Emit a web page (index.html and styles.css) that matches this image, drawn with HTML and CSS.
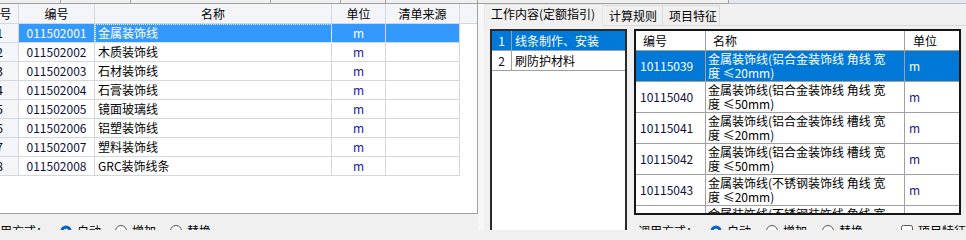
FILE: index.html
```html
<!DOCTYPE html>
<html>
<head>
<meta charset="utf-8">
<link rel="stylesheet" href="styles.css">
</head>
<body>
<div class="strip">
  <span class="s s1"></span><span class="s s2"></span><span class="s s3"></span><span class="s s4"></span><span class="s s5"></span><span class="s s6"></span><span class="s s7"></span><span class="s s8"></span>
</div>
<div class="main">
  <div class="left">
    <div class="lpanel">
      <div class="lgrid">
        <div class="lr lh"><div>序号</div><div>编号</div><div>名称</div><div>单位</div><div>清单来源</div><div class="fill"></div></div>
        <div class="lr sel"><div class="rn">1</div><div class="code">011502001</div><div class="name">金属装饰线</div><div class="unit">m</div><div class="src"></div><div class="fill"></div></div>
        <div class="lr"><div class="rn">2</div><div class="code">011502002</div><div class="name">木质装饰线</div><div class="unit">m</div><div class="src"></div><div class="fill"></div></div>
        <div class="lr"><div class="rn">3</div><div class="code">011502003</div><div class="name">石材装饰线</div><div class="unit">m</div><div class="src"></div><div class="fill"></div></div>
        <div class="lr"><div class="rn">4</div><div class="code">011502004</div><div class="name">石膏装饰线</div><div class="unit">m</div><div class="src"></div><div class="fill"></div></div>
        <div class="lr"><div class="rn">5</div><div class="code">011502005</div><div class="name">镜面玻璃线</div><div class="unit">m</div><div class="src"></div><div class="fill"></div></div>
        <div class="lr"><div class="rn">6</div><div class="code">011502006</div><div class="name">铝塑装饰线</div><div class="unit">m</div><div class="src"></div><div class="fill"></div></div>
        <div class="lr"><div class="rn">7</div><div class="code">011502007</div><div class="name">塑料装饰线</div><div class="unit">m</div><div class="src"></div><div class="fill"></div></div>
        <div class="lr"><div class="rn">8</div><div class="code">011502008</div><div class="name">GRC装饰线条</div><div class="unit">m</div><div class="src"></div><div class="fill"></div></div>
      </div>
    </div>
    <div class="call lcall">
      <span class="lbl">调用方式：</span>
      <span class="opt first"><svg class="rb" viewBox="0 0 12 12"><circle cx="6" cy="6" r="5.5" fill="#0a64c8"/><circle cx="6" cy="6" r="2.3" fill="#fff"/></svg>自动</span>
      <span class="opt"><svg class="rb" viewBox="0 0 12 12"><circle cx="6" cy="6" r="5.5" fill="#fff" stroke="#555" stroke-width="1"/></svg>增加</span>
      <span class="opt"><svg class="rb" viewBox="0 0 12 12"><circle cx="6" cy="6" r="5.5" fill="#fff" stroke="#555" stroke-width="1"/></svg>替换</span>
    </div>
  </div>
  <div class="split"></div>
  <div class="right">
    <div class="tabs">
      <div class="tab active">工作内容(定额指引)</div>
      <div class="tab t2">计算规则</div>
      <div class="tab t3">项目特征</div>
    </div>
    <div class="rcontent">
      <div class="list">
        <div class="li sel"><div class="ln">1</div><div class="lt">线条制作、安装</div></div>
        <div class="li"><div class="ln">2</div><div class="lt">刷防护材料</div></div>
      </div>
      <div class="tcol">
        <div class="tbox">
          <div class="tr th"><div class="c1">编号</div><div class="c2">名称</div><div class="c3">单位</div></div>
          <div class="tr td sel"><div class="c1">10115039</div><div class="c2"><span>金属装饰线(铝合金装饰线 角线 宽<br>度 ≤20mm)</span></div><div class="c3">m</div></div>
          <div class="tr td"><div class="c1">10115040</div><div class="c2"><span>金属装饰线(铝合金装饰线 角线 宽<br>度 ≤50mm)</span></div><div class="c3">m</div></div>
          <div class="tr td"><div class="c1">10115041</div><div class="c2"><span>金属装饰线(铝合金装饰线 槽线 宽<br>度 ≤20mm)</span></div><div class="c3">m</div></div>
          <div class="tr td"><div class="c1">10115042</div><div class="c2"><span>金属装饰线(铝合金装饰线 槽线 宽<br>度 ≤50mm)</span></div><div class="c3">m</div></div>
          <div class="tr td"><div class="c1">10115043</div><div class="c2"><span>金属装饰线(不锈钢装饰线 角线 宽<br>度 ≤20mm)</span></div><div class="c3">m</div></div>
          <div class="tr td"><div class="c1">10115044</div><div class="c2"><span>金属装饰线(不锈钢装饰线 角线 宽<br>度 ≤50mm)</span></div><div class="c3">m</div></div>
        </div>
        <div class="call rcall">
          <span class="lbl">调用方式：</span>
          <span class="opt first"><svg class="rb" viewBox="0 0 12 12"><circle cx="6" cy="6" r="5.5" fill="#0a64c8"/><circle cx="6" cy="6" r="2.3" fill="#fff"/></svg>自动</span>
          <span class="opt"><svg class="rb" viewBox="0 0 12 12"><circle cx="6" cy="6" r="5.5" fill="#fff" stroke="#555" stroke-width="1"/></svg>增加</span>
          <span class="opt"><svg class="rb" viewBox="0 0 12 12"><circle cx="6" cy="6" r="5.5" fill="#fff" stroke="#555" stroke-width="1"/></svg>替换</span>
          <span class="opt chk"><svg class="rb" viewBox="0 0 12 12"><rect x="0.5" y="0.5" width="11" height="11" rx="2" fill="#fff" stroke="#555" stroke-width="1"/></svg>项目特征</span>
        </div>
      </div>
    </div>
  </div>
</div>
</body>
</html>
```
FILE: styles.css
```css
* { box-sizing: border-box; }
body {
  margin: 0;
  width: 966px;
  height: 230px;
  overflow: hidden;
  background: #f0f0f0;
  font-family: "Noto Sans CJK SC", "Liberation Sans", sans-serif;
  font-size: 12px;
  color: #000;
  line-height: 16px;
}
.strip {
  display: flex;
  height: 4px;
}
.s {
  height: 4px;
  border-right: 1px solid #a0a0a0;
  border-bottom: 1px solid #a0a0a0;
  background: #f0f0f0;
}
.s1 { width: 61px; }
.s2 { width: 70px; }
.s3 { width: 140px; }
.s4 { width: 70px; }
.s5 { width: 45px; }
.s6 { width: 92px; }
.s7 { width: 251px; }
.s8 { flex: 1; border-right: none; background: #e4e7ee; border-bottom-color: #b4bccc; }

.main {
  display: flex;
  height: 226px;
}
.left {
  width: 478px;
  display: flex;
  flex-direction: column;
}
.lpanel {
  flex: none;
  height: 210px;
  background: #fff;
  border-right: 1px solid #a0a0a0;
  border-bottom: 1px solid #a0a0a0;
  overflow: hidden;
}
.lgrid { margin-left: -19px; }
.lr {
  display: grid;
  grid-template-columns: 38px 76px 237px 54px 74px 1fr;
  height: 19px;
}
.lr > div {
  border-right: 1px solid #d6d6de;
  border-bottom: 1px solid #d6d6de;
  line-height: 18px;
  white-space: nowrap;
  overflow: hidden;
}
.lr > .fill { border: none; }
.lh { height: 20px; }
.lh > div {
  background: #f4f5f8;
  text-align: center;
  line-height: 19px;
}
.lh > .fill { border-bottom: 1px solid #d6d6de; }
.rn { background: #f4f5f8; text-align: center; }
.code { text-align: center; color: #10103c; }
.name { padding-left: 3px; }
.unit { text-align: center; color: #2020a8; }
.lr.sel > .code,
.lr.sel > .name,
.lr.sel > .unit,
.lr.sel > .src {
  background: #3399ff;
  color: #fff;
}
.lr.sel > .name {
  outline: 1px dotted #e8f2ff;
  outline-offset: -1px;
}

.call {
  flex: none;
  display: flex;
  align-items: center;
  white-space: nowrap;
}
.lcall {
  padding-top: 9px;
  margin-left: -12px;
}
.lbl { width: 60px; }
.opt {
  display: flex;
  align-items: center;
  gap: 5px;
  margin-left: 14px;
}
.opt.first { margin-left: 12px; }
.rb { width: 12px; height: 12px; flex: none; }

.split {
  width: 6px;
  background: #f7f7f7;
}
.right {
  flex: 1;
  display: flex;
  flex-direction: column;
}
.tabs {
  flex: none;
  display: flex;
  height: 22px;
  border-bottom: 1px solid #dadada;
}
.tab {
  padding: 2px 6px 0;
  border: 1px solid #dadada;
  border-bottom: none;
  background: #f0f0f0;
  white-space: nowrap;
}
.tab.active {
  width: 119px;
  height: 22px;
  padding-top: 1px;
  border-color: #e6e6e6;
}
.tab.t2 { width: 60px; margin-top: 1px; border-left: none; }
.tab.t3 { width: 57px; margin-top: 1px; border-left: none; }

.rcontent {
  flex: none;
  display: flex;
  margin-top: 3px;
}
.list {
  flex: none;
  width: 137px;
  height: 210px;
  margin-left: 6px;
  border: 2px solid #2a2a2a;
  background: #fff;
}
.li {
  display: flex;
  height: 20px;
  border-bottom: 1px solid #a0a0a0;
  line-height: 19px;
}
.ln {
  width: 20px;
  border-right: 1px solid #a0a0a0;
  text-align: center;
  color: #10103c;
}
.lt { padding-left: 3px; }
.li.sel { background: #0078d7; color: #fff; }
.li.sel .ln { color: #fff; }

.tcol {
  flex: none;
  width: 327px;
  margin-left: 7px;
  display: flex;
  flex-direction: column;
}
.tbox {
  flex: none;
  height: 186px;
  border: 2px solid #161616;
  background: #fff;
  overflow: hidden;
}
.tr {
  display: grid;
  grid-template-columns: 70px 199px 54px;
  border-bottom: 1px solid #a0a0a0;
}
.tr > div {
  display: flex;
  align-items: center;
  border-right: 1px solid #a0a0a0;
  white-space: nowrap;
}
.tr > .c3 { border-right: none; }
.th { height: 20px; }
.th > .c1 { padding-left: 7px; }
.th > .c2 { padding-left: 7px; }
.th > .c3 { padding-left: 8px; }
.td { height: 31px; }
.td > .c1 { padding-left: 4px; color: #10103c; }
.td > .c2 { padding-left: 2px; line-height: 14px; }
.td > .c3 { padding-left: 4px; color: #1a1a8a; }
.td.sel { background: #0078d7; }
.td.sel > div { color: #fff; }
.rcall {
  padding-top: 8px;
  padding-left: 4px;
}
.rcall .opt { margin-left: 15px; }
.rcall .opt.first { margin-left: 12px; }
.rcall .opt.chk { margin-left: 38px; }
```
